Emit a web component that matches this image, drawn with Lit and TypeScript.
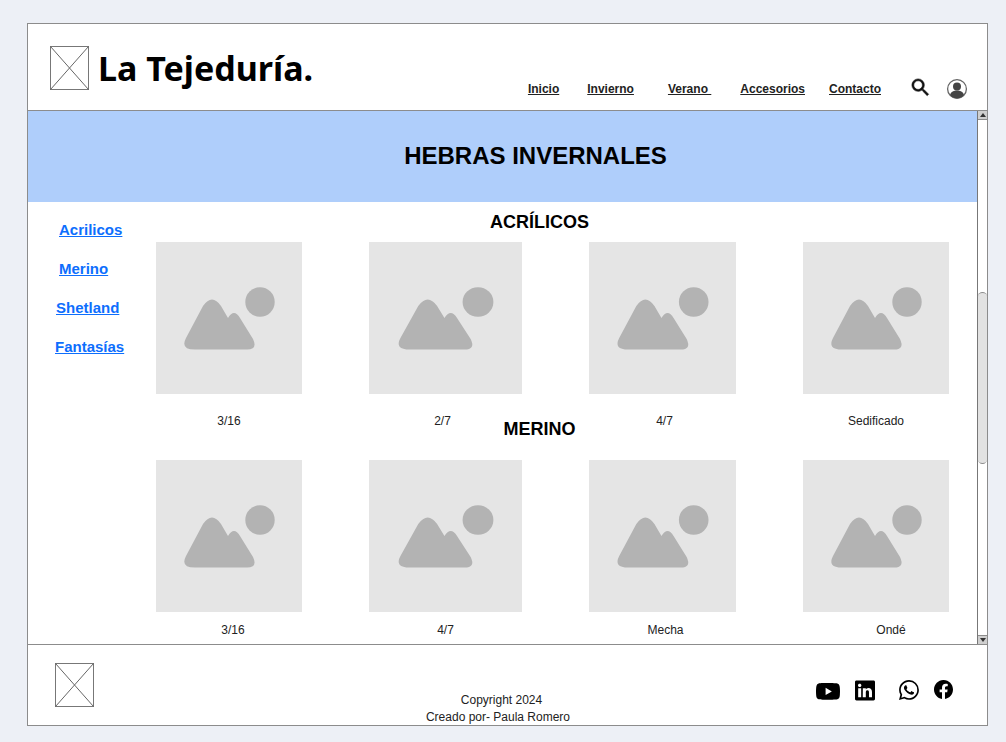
import { LitElement, css, html, svg } from 'lit';
import { customElement } from 'lit/decorators.js';

const navLinks = [
  { label: 'Inicio', gap: 0 },
  { label: 'Invierno', gap: 28 },
  { label: 'Verano\u00a0', gap: 34 },
  { label: 'Accesorios', gap: 29 },
  { label: 'Contacto', gap: 24 },
];

const sideLinks = [
  { label: 'Acrilicos', indent: 31 },
  { label: 'Merino', indent: 31 },
  { label: 'Shetland', indent: 28 },
  { label: 'Fantasías', indent: 27 },
];

const sections = [
  {
    title: 'ACRÍLICOS',
    cls: 'first',
    items: [
      { name: '3/16', shift: 0 },
      { name: '2/7', shift: -3 },
      { name: '4/7', shift: 2 },
      { name: 'Sedificado', shift: 0 },
    ],
  },
  {
    title: 'MERINO',
    cls: 'second',
    items: [
      { name: '3/16', shift: 4 },
      { name: '4/7', shift: 0 },
      { name: 'Mecha', shift: 3 },
      { name: 'Ondé', shift: 15 },
    ],
  },
];

const crossedBox = html`
  <svg class="logo-box" viewBox="0 0 39 44" preserveAspectRatio="none">
    <rect x="0.5" y="0.5" width="38" height="43" fill="#fff" stroke="#777" />
    <path d="M0.5 0.5L38.5 43.5M38.5 0.5L0.5 43.5" stroke="#666" fill="none" />
  </svg>
`;

const placeholder = svg`
  <rect width="146" height="152" fill="#e5e5e5" />
  <circle cx="104" cy="60" r="14.7" fill="#b3b3b3" />
  <path
    d="M39 107.6Q24 107.6 30 96L47 64Q56 51 65 64L72 76Q78 66 84 76L97 97Q102 107.6 91 107.6Z"
    fill="#b3b3b3"
  />
`;

@customElement('app-root')
export class AppRoot extends LitElement {
  static styles = css`
    :host {
      display: block;
      height: 742px;
      box-sizing: border-box;
      padding: 23px 18px 16px 27px;
      background: #edf0f6;
      font-family: 'Liberation Sans', Arial, sans-serif;
      color: #111;
      overflow: hidden;
    }
    .frame {
      height: 703px;
      box-sizing: border-box;
      border: 1px solid #8c8c8c;
      background: #fff;
      display: flex;
      flex-direction: column;
    }
    .header {
      height: 87px;
      flex: none;
      box-sizing: border-box;
      border-bottom: 1px solid #8c8c8c;
      display: flex;
      padding-left: 22px;
    }
    .brand {
      display: flex;
      align-items: flex-start;
      gap: 9px;
      padding-top: 22px;
    }
    .logo-box {
      width: 39px;
      height: 44px;
      display: block;
      flex: none;
    }
    .brand-name {
      font-family: 'Noto Sans', sans-serif;
      font-weight: 700;
      font-size: 34px;
      line-height: 44px;
      color: #000;
      white-space: nowrap;
    }
    .nav {
      margin-left: auto;
      display: flex;
      align-items: center;
      height: 30px;
      margin-top: 50px;
      padding-right: 19px;
    }
    .nav a {
      font-size: 12px;
      font-weight: 700;
      color: #222;
      text-decoration: underline;
      white-space: pre;
    }
    .search {
      width: 23px;
      height: 23px;
      margin-left: 28px;
      margin-top: -4px;
    }
    .user {
      width: 22px;
      height: 22px;
      margin-left: 14px;
    }
    .body {
      flex: 1;
      min-height: 0;
      display: flex;
    }
    .scroll-area {
      flex: 1;
      min-width: 0;
      overflow: hidden;
    }
    .banner {
      height: 91px;
      box-sizing: border-box;
      background: #afcefb;
      display: flex;
      align-items: center;
      justify-content: center;
      padding: 0 0 2px 66px;
    }
    .banner h1 {
      margin: 0;
      font-size: 24px;
      font-weight: 700;
      color: #000;
    }
    .content {
      display: flex;
    }
    .side {
      width: 128px;
      flex: none;
      padding-top: 19px;
      display: flex;
      flex-direction: column;
      gap: 22px;
      font-size: 15px;
      line-height: 17px;
    }
    .side a {
      font-weight: 700;
      color: #0d6efd;
      text-decoration: underline;
    }
    .products {
      flex: 1;
      min-width: 0;
    }
    .section-title {
      margin: 0;
      font-size: 18px;
      line-height: 20px;
      font-weight: 700;
      color: #000;
      text-align: center;
      width: 767px;
    }
    .first {
      padding-top: 10px;
    }
    .first .section-title {
      margin-bottom: 10px;
    }
    .second {
      margin-top: -9px;
    }
    .second .section-title {
      margin-bottom: 21px;
      position: relative;
    }
    .grid {
      display: grid;
      grid-template-columns: 146px 153px 147px 146px;
      column-gap: 67px;
    }
    .thumb {
      display: block;
      width: 100%;
      height: 152px;
    }
    .caption {
      font-size: 12px;
      line-height: 14px;
      text-align: center;
      color: #222;
    }
    .first .caption {
      margin-top: 20px;
    }
    .second .caption {
      margin-top: 11px;
    }
    .scrollbar {
      width: 9px;
      flex: none;
      border-left: 1px solid #777;
      display: flex;
      flex-direction: column;
      background: #fff;
    }
    .arrow {
      height: 8px;
      flex: none;
      background: #cfcfcf;
      border: 1px solid #8c8c8c;
      border-width: 0 0 1px;
      display: flex;
      align-items: center;
      justify-content: center;
    }
    .arrow.down {
      border-width: 1px 0 0;
      margin-top: auto;
    }
    .arrow::before {
      content: '';
      border-left: 3px solid transparent;
      border-right: 3px solid transparent;
      border-bottom: 4px solid #333;
    }
    .arrow.down::before {
      border-bottom: 0;
      border-top: 4px solid #333;
    }
    .bar-thumb {
      height: 172px;
      margin-top: 172px;
      box-sizing: border-box;
      border: 1px solid #8c8c8c;
      border-width: 1px 0;
      border-radius: 5px;
      background: #e2e2e2;
    }
    .footer {
      height: 81px;
      flex: none;
      box-sizing: border-box;
      border-top: 1px solid #8c8c8c;
      display: grid;
      grid-template-columns: 300px 340px 1fr;
    }
    .foot-logo {
      padding: 18px 0 0 27px;
    }
    .copy {
      font-size: 12px;
      line-height: 17px;
      text-align: center;
      color: #222;
      padding-top: 47px;
    }
    .copy span {
      display: block;
    }
    .copy .year {
      padding-left: 7px;
    }
    .social {
      display: flex;
      align-items: flex-start;
      padding: 35px 0 0 148px;
    }
    .social svg {
      display: block;
      fill: #000;
    }
  `;

  render() {
    return html`
      <div class="frame">
        <header class="header">
          <div class="brand">
            ${crossedBox}
            <div class="brand-name">La Tejeduría.</div>
          </div>
          <nav class="nav">
            ${navLinks.map(
              (l) => html`<a href="#" style="margin-left:${l.gap}px">${l.label}</a>`,
            )}
            <svg class="search" viewBox="0 0 24 24">
              <path
                fill="#111"
                stroke="#111"
                stroke-width="0.6"
                d="M15.5 14h-.79l-.28-.27A6.47 6.47 0 0 0 16 9.5 6.5 6.5 0 1 0 9.5 16c1.61 0 3.09-.59 4.23-1.57l.27.28v.79l5 4.99L20.49 19l-4.99-5zm-6 0C7.01 14 5 11.99 5 9.5S7.01 5 9.5 5 14 7.01 14 9.5 11.99 14 9.5 14z"
              />
            </svg>
            <svg class="user" viewBox="0 0 22 22">
              <circle cx="11" cy="11" r="9.4" fill="#fff" stroke="#666" stroke-width="1.3" />
              <circle cx="11" cy="8.500" r="4" fill="#444" />
              <path d="M4 17c1-3.5 4-4.5 7-4.5s6 1 7 4.500a9 9 0 0 1-14 0z" fill="#444" />
            </svg>
          </nav>
        </header>
        <div class="body">
          <div class="scroll-area">
            <div class="banner"><h1>HEBRAS INVERNALES</h1></div>
            <div class="content">
              <aside class="side">
                ${sideLinks.map(
                  (l) => html`<div style="padding-left:${l.indent}px"><a href="#">${l.label}</a></div>`,
                )}
              </aside>
              <div class="products">
                ${sections.map(
                  (s) => html`
                    <section class=${s.cls}>
                      <h2 class="section-title">${s.title}</h2>
                      <div class="grid">
                        ${s.items.map(
                          (it) => html`
                            <div>
                              <svg class="thumb" viewBox="0 0 146 152" preserveAspectRatio="none">
                                ${placeholder}
                              </svg>
                              <div class="caption" style="transform:translateX(${it.shift}px)">
                                ${it.name}
                              </div>
                            </div>
                          `,
                        )}
                      </div>
                    </section>
                  `,
                )}
              </div>
            </div>
          </div>
          <div class="scrollbar">
            <div class="arrow"></div>
            <div class="bar-thumb"></div>
            <div class="arrow down"></div>
          </div>
        </div>
        <footer class="footer">
          <div class="foot-logo">${crossedBox}</div>
          <div class="copy">
            <span class="year">Copyright 2024</span>
            <span>Creado por- Paula Romero</span>
          </div>
          <div class="social">
            <svg width="24" height="24" viewBox="0 0 16 16">
              <path
                d="M8.051 1.999h.089c.822.003 4.987.033 6.11.335a2.01 2.01 0 0 1 1.415 1.42c.101.38.172.883.22 1.402l.01.104.022.26.008.104c.065.914.073 1.77.074 1.957v.075c-.001.194-.01 1.108-.082 2.06l-.008.105-.009.104c-.05.572-.124 1.14-.235 1.558a2.007 2.007 0 0 1-1.415 1.42c-1.16.312-5.569.334-6.18.335h-.142c-.309 0-1.587-.006-2.927-.052l-.17-.006-.087-.004-.171-.007-.171-.007c-1.11-.049-2.167-.128-2.654-.26a2.007 2.007 0 0 1-1.415-1.419c-.111-.417-.185-.986-.235-1.558L.09 9.82l-.008-.104A31.4 31.4 0 0 1 0 7.68v-.123c.002-.215.01-.958.064-1.778l.007-.103.003-.052.008-.104.022-.26.01-.104c.048-.519.119-1.023.22-1.402a2.007 2.007 0 0 1 1.415-1.42c.487-.13 1.544-.21 2.654-.26l.17-.007.172-.006.086-.003.171-.007A99.788 99.788 0 0 1 7.858 2h.193zM6.4 5.209v4.818l4.157-2.408L6.4 5.209z"
              />
            </svg>
            <svg style="margin-left:15px" width="20" height="21" viewBox="0 0 16 16">
              <path
                d="M0 1.146C0 .513.526 0 1.175 0h13.65C15.474 0 16 .513 16 1.146v13.708c0 .633-.526 1.146-1.175 1.146H1.175C.526 16 0 15.487 0 14.854V1.146zm4.943 12.248V6.169H2.542v7.225h2.401zm-1.2-8.212c.837 0 1.358-.554 1.358-1.248-.015-.709-.52-1.248-1.342-1.248-.822 0-1.359.54-1.359 1.248 0 .694.521 1.248 1.327 1.248h.016zm4.908 8.212V9.359c0-.216.016-.432.08-.586.173-.431.568-.878 1.232-.878.869 0 1.216.662 1.216 1.634v3.865h2.401V9.25c0-2.22-1.184-3.252-2.764-3.252-1.274 0-1.845.7-2.165 1.193v.025h-.016a5.54 5.54 0 0 1 .016-.025V6.169h-2.4c.03.678 0 7.225 0 7.225h2.4z"
              />
            </svg>
            <svg style="margin-left:24px" width="20" height="20" viewBox="0 0 16 16">
              <path
                d="M13.601 2.326A7.854 7.854 0 0 0 7.994 0C3.627 0 .068 3.558.064 7.926c0 1.399.366 2.76 1.057 3.965L0 16l4.204-1.102a7.933 7.933 0 0 0 3.79.965h.004c4.368 0 7.926-3.558 7.93-7.93A7.898 7.898 0 0 0 13.6 2.326zM7.994 14.521a6.573 6.573 0 0 1-3.356-.92l-.24-.144-2.494.654.666-2.433-.156-.251a6.56 6.56 0 0 1-1.007-3.505c0-3.626 2.957-6.584 6.591-6.584a6.56 6.56 0 0 1 4.66 1.931 6.557 6.557 0 0 1 1.928 4.66c-.004 3.639-2.961 6.592-6.592 6.592zm3.615-4.934c-.197-.099-1.17-.578-1.353-.646-.182-.065-.315-.099-.445.099-.133.197-.513.646-.627.775-.114.133-.232.148-.43.05-.197-.1-.836-.308-1.592-.985-.59-.525-.985-1.175-1.103-1.372-.114-.198-.011-.304.088-.403.087-.088.197-.232.296-.346.1-.114.133-.198.198-.33.065-.134.034-.248-.015-.347-.05-.099-.445-1.076-.612-1.47-.16-.389-.323-.335-.445-.34-.114-.007-.247-.007-.38-.007a.729.729 0 0 0-.529.247c-.182.198-.691.677-.691 1.654 0 .977.71 1.916.81 2.049.098.133 1.394 2.132 3.383 2.992.47.205.84.326 1.129.418.475.152.904.129 1.246.08.38-.058 1.171-.48 1.338-.943.164-.464.164-.86.114-.943-.049-.084-.182-.133-.38-.232z"
              />
            </svg>
            <svg style="margin-left:15px" width="19" height="19" viewBox="0 0 16 16">
              <path
                d="M16 8.049c0-4.446-3.582-8.05-8-8.05C3.58 0-.002 3.603-.002 8.05c0 4.017 2.926 7.347 6.75 7.951v-5.625h-2.03V8.05H6.75V6.275c0-2.017 1.195-3.131 3.022-3.131.876 0 1.791.157 1.791.157v1.98h-1.009c-.993 0-1.303.621-1.303 1.258v1.51h2.218l-.354 2.326H9.25V16c3.824-.604 6.75-3.934 6.75-7.951z"
              />
            </svg>
          </div>
        </footer>
      </div>
    `;
  }
}
